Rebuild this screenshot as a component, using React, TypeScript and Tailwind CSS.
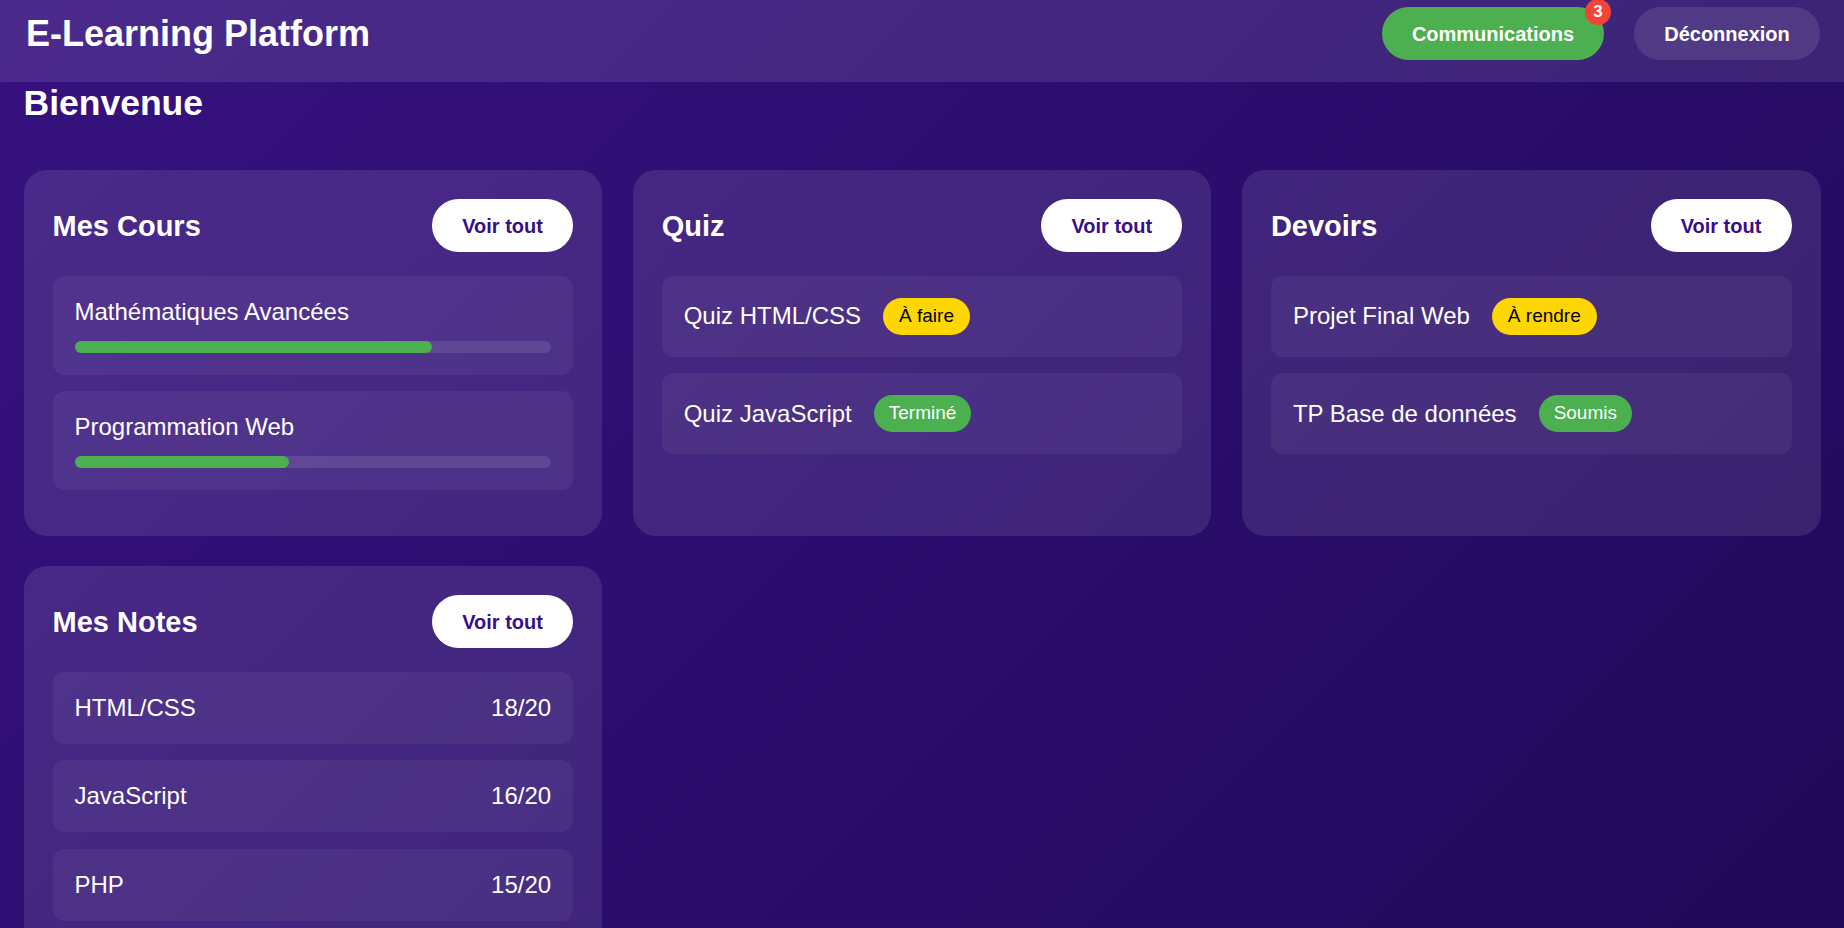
import React from "react";

const font = "font-['Liberation_Sans',Arial,Helvetica,sans-serif]";

function VoirTout() {
  return (
    <button className="h-[53px] w-[141px] shrink-0 rounded-full bg-white text-[20px] font-bold text-[#3a0f86]">
      Voir tout
    </button>
  );
}

function Card({ title, children }: { title: string; children: React.ReactNode }) {
  return (
    <div className="rounded-[23px] bg-white/10 p-[29px]">
      <div className="mb-[23.5px] flex items-center justify-between">
        <h3 className="text-[29px] font-bold leading-[34px]">{title}</h3>
        <VoirTout />
      </div>
      <div className="flex flex-col">{children}</div>
    </div>
  );
}

function Badge({ label, kind }: { label: string; kind: "yellow" | "green" }) {
  return (
    <span
      className={
        kind === "yellow"
          ? "flex h-[37px] items-center rounded-full bg-[#ffd700] px-[16px] text-[19px] text-black"
          : "flex h-[37px] items-center rounded-full bg-[#4caf50] px-[15px] text-[19px] text-white"
      }
    >
      {label}
    </span>
  );
}

function CourseItem({ name, pct }: { name: string; pct: number }) {
  return (
    <div className="mb-[16.5px] rounded-[12px] bg-white/5 p-[22px]">
      <div className="mb-[15px] text-[24px] leading-[28px]">{name}</div>
      <div className="h-[12px] w-full rounded-full bg-white/10">
        <div className="h-full rounded-full bg-[#4caf50]" style={{ width: `${pct}%` }} />
      </div>
    </div>
  );
}

function StatusItem({ name, badge, kind }: { name: string; badge: string; kind: "yellow" | "green" }) {
  return (
    <div className="mb-[16.5px] flex items-center gap-[22px] rounded-[12px] bg-white/5 p-[22px]">
      <span className="text-[24px] leading-[28px]">{name}</span>
      <Badge label={badge} kind={kind} />
    </div>
  );
}

function GradeItem({ name, grade }: { name: string; grade: string }) {
  return (
    <div className="mb-[16.5px] flex items-center justify-between rounded-[12px] bg-white/5 px-[22px] py-[22px]">
      <span className="text-[24px] leading-[28px]">{name}</span>
      <span className="text-[24px] leading-[28px]">{grade}</span>
    </div>
  );
}

export default function App() {
  return (
    <div
      className={`h-screen overflow-hidden bg-[linear-gradient(135deg,#37127f_0%,#2c0d6e_50%,#200958_100%)] text-white ${font}`}
    >
      <header className="flex h-[82px] items-start justify-between bg-white/10 pl-[26px] pr-[24px] pt-[7px]">
        <h1 className="text-[36px] font-bold leading-[53px]">E-Learning Platform</h1>
        <div className="flex gap-[30px]">
          <div className="relative">
            <button className="h-[53px] w-[222px] rounded-full bg-[#4caf50] text-[20px] font-bold text-white">
              Communications
            </button>
            <span className="absolute -right-[7px] -top-[8px] flex h-[26px] w-[26px] items-center justify-center rounded-full bg-[#f44336] text-[17px] font-bold text-white">
              3
            </span>
          </div>
          <button className="h-[53px] w-[186px] rounded-full bg-white/10 text-[20px] font-bold text-white">
            Déconnexion
          </button>
        </div>
      </header>
      <main className="px-[23.5px]">
        <h2 className="mb-[47px] pt-[2px] text-[35.5px] font-bold leading-[39px]">Bienvenue</h2>
        <div className="grid grid-cols-3 gap-[30.6px]">
          <Card title="Mes Cours">
            <CourseItem name="Mathématiques Avancées" pct={75} />
            <CourseItem name="Programmation Web" pct={45} />
          </Card>
          <Card title="Quiz">
            <StatusItem name="Quiz HTML/CSS" badge="À faire" kind="yellow" />
            <StatusItem name="Quiz JavaScript" badge="Terminé" kind="green" />
          </Card>
          <Card title="Devoirs">
            <StatusItem name="Projet Final Web" badge="À rendre" kind="yellow" />
            <StatusItem name="TP Base de données" badge="Soumis" kind="green" />
          </Card>
          <Card title="Mes Notes">
            <GradeItem name="HTML/CSS" grade="18/20" />
            <GradeItem name="JavaScript" grade="16/20" />
            <GradeItem name="PHP" grade="15/20" />
          </Card>
        </div>
      </main>
    </div>
  );
}
